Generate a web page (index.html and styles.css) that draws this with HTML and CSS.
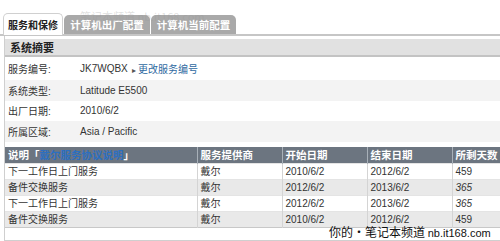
FILE: index.html
```html
<!DOCTYPE html>
<html lang="zh">
<head>
    <meta charset="UTF-8">
    <title>服务和保修</title>
    <link rel="stylesheet" href="styles.css">
</head>
<body>
    <div class="tabs">
        <div class="tab active">服务和保修</div>
        <div class="tab">计算机出厂配置</div>
        <div class="tab">计算机当前配置</div>
    </div>
    <div class="watermark-top">笔记本频道 nb.it168.com</div>

    <div class="panel">
        <div class="summary-head">系统摘要</div>
        <div class="info-row first">
            <span class="label">服务编号:</span>
            <span class="value">JK7WQBX</span>
            <a class="change-link" href="#"><span class="arrow">&#9656;</span>更改服务编号</a>
        </div>
        <div class="info-row alt">
            <span class="label">系统类型:</span>
            <span class="value">Latitude E5500</span>
        </div>
        <div class="info-row">
            <span class="label">出厂日期:</span>
            <span class="value">2010/6/2</span>
        </div>
        <div class="info-row alt">
            <span class="label">所属区域:</span>
            <span class="value">Asia / Pacific</span>
        </div>

        <table class="warranty">
            <tr>
                <th class="c-desc">说明「<a href="#">戴尔服务协议说明</a>」</th>
                <th class="c-prov">服务提供商</th>
                <th class="c-date">开始日期</th>
                <th class="c-date">结束日期</th>
                <th class="c-days">所剩天数</th>
            </tr>
            <tr>
                <td>下一工作日上门服务</td><td>戴尔</td><td>2010/6/2</td><td>2012/6/2</td><td>459</td>
            </tr>
            <tr class="alt">
                <td>备件交换服务</td><td>戴尔</td><td>2012/6/2</td><td>2013/6/2</td><td class="days">365</td>
            </tr>
            <tr>
                <td>下一工作日上门服务</td><td>戴尔</td><td>2012/6/2</td><td>2013/6/2</td><td class="days">365</td>
            </tr>
            <tr class="alt">
                <td>备件交换服务</td><td>戴尔</td><td>2010/6/2</td><td>2012/6/2</td><td>459</td>
            </tr>
        </table>
    </div>

    <div class="watermark">你的・笔记本频道 <span class="url">nb.it168.com</span></div>
</body>
</html>
```

FILE: styles.css
```css
body {
    margin: 0;
    width: 500px;
    height: 241px;
    overflow: hidden;
    background-color: #fff;
    font-family: "Liberation Sans", Arial, "Noto Sans CJK SC", sans-serif;
    font-size: 10px;
    color: #333;
    position: relative;
}

.tabs {
    display: flex;
    margin-top: 14px;
    padding-left: 3px;
    height: 20px;
    border-bottom: 2px solid #c6c6c6;
}

.tab {
    box-sizing: border-box;
    height: 19px;
    line-height: 19px;
    margin-top: 1px;
    margin-right: 1px;
    border-radius: 5px 5px 0 0;
    background-color: #a9a9a9;
    color: #fff;
    font-family: "Noto Sans CJK SC", serif;
    font-weight: bold;
    font-size: 10.5px;
    text-align: center;
    white-space: nowrap;
}

.tab:nth-child(2) {
    width: 86px;
}

.tab:nth-child(3) {
    width: 85px;
}

.tab.active {
    width: 60px;
    height: 22px;
    line-height: 21px;
    margin-top: -1px;
    margin-bottom: -2px;
    background-color: #fff;
    color: #222;
    font-size: 10px;
    border: 1px solid #d0d0d0;
    border-bottom: none;
}

.watermark-top {
    position: absolute;
    left: 80px;
    top: 8px;
    font-size: 11px;
    color: rgba(150, 150, 150, 0.3);
    font-family: "Noto Sans CJK SC", sans-serif;
}

.panel {
    margin-left: 4px;
    padding-top: 3px;
    border-left: 1px solid #cfcfcf;
    border-bottom: 1px solid #cfcfcf;
    height: 201px;
}

.summary-head {
    height: 16px;
    line-height: 16px;
    padding-left: 5px;
    background-color: #e1e1e1;
    border-bottom: 2px solid #c3c3c3;
    font-family: "Noto Sans CJK SC", serif;
    font-weight: bold;
    font-size: 11px;
    color: #222;
}

.info-row {
    display: flex;
    align-items: center;
    height: 20.5px;
    padding-left: 3px;
    font-size: 10px;
}

.info-row.first {
    height: 23px;
}

.info-row.alt {
    background-color: #f3f3f3;
}

.label {
    width: 72px;
    color: #333;
}

.value {
    width: 52px;
    white-space: nowrap;
}

.change-link {
    color: #2f6aa1;
    text-decoration: none;
}

.arrow {
    font-size: 8px;
    margin-right: 2px;
    color: #555;
}

.warranty {
    margin-top: 5px;
    width: 100%;
    table-layout: fixed;
    border-collapse: collapse;
    font-size: 10px;
    line-height: 15px;
    border-bottom: 1px solid #c8c8c8;
}

.warranty th, .warranty td {
    box-sizing: border-box;
}

.warranty th {
    background-color: #6c7580;
    color: #fff;
    text-align: left;
    height: 16px;
    line-height: 16px;
    padding: 0 3px;
    font-family: "Noto Sans CJK SC", serif;
    font-weight: bold;
    font-size: 10.5px;
    border-left: 1px solid #a8b0b8;
    white-space: nowrap;
    overflow: hidden;
}

.warranty th:first-child, .warranty td:first-child {
    border-left: none;
}

.warranty th a {
    color: #2c6fc0;
    text-decoration: none;
}

.warranty td {
    height: 16px;
    padding: 0 3px;
    border-left: 1px solid #d4d4d4;
    border-top: 1px solid #e4e4e4;
    white-space: nowrap;
    overflow: hidden;
}

.warranty tr.alt td {
    background-color: #e9e9e9;
}

.c-desc {
    width: 192px;
}

.c-prov {
    width: 85px;
}

.c-date {
    width: 85px;
}

.c-days {
    width: 48px;
}

.days {
    font-style: italic;
}

.watermark {
    position: absolute;
    left: 329px;
    top: 224px;
    line-height: 16px;
    font-size: 12px;
    color: #111;
    white-space: nowrap;
    font-family: "Noto Sans CJK SC", sans-serif;
}

.watermark .url {
    font-family: "Liberation Sans", sans-serif;
    font-size: 11px;
}
```
